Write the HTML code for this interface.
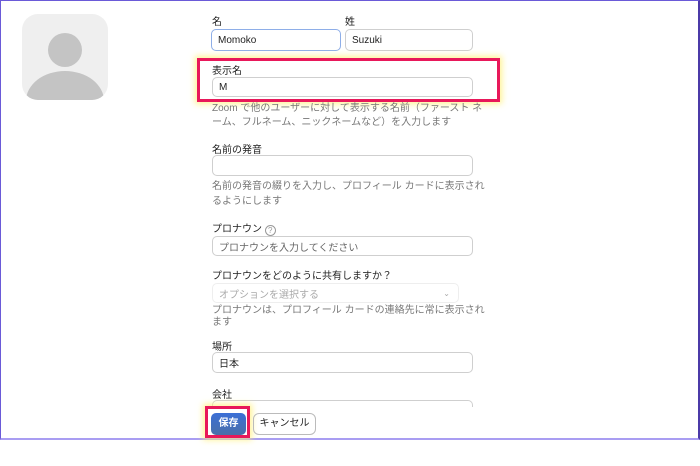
<!DOCTYPE html>
<html><head><meta charset="utf-8"><style>
*{margin:0;padding:0;box-sizing:border-box}
body{width:700px;height:466px;background:#fff;position:relative;overflow:hidden;font-family:"Liberation Sans","Noto Sans CJK JP",sans-serif;color:#222}
.frame{position:absolute;left:0;top:0;width:700px;height:440px;border-top:1px solid #6a5ad8;border-left:1px solid #6a5ad8;border-right:2px solid #4b3aa8;border-bottom:2px solid #a99df2}
.a{position:absolute;white-space:nowrap}
.lbl{font-size:10px;color:#222}
.help{font-size:10px;color:#777;line-height:15px}
.in{position:absolute;border:1px solid #cfcfcf;border-radius:5px;background:#fff;font-size:10px;padding-left:6px;display:flex;align-items:center}
.red{position:absolute;border:3px solid #e8185a;box-shadow:0 0 6px 2px rgba(255,240,120,.8)}
</style></head><body>
<div class="frame"></div>
<div class="a" style="left:22px;top:14px;width:86px;height:86px;background:#efefef;border-radius:16px;overflow:hidden">
<div style="position:absolute;left:26px;top:19px;width:34px;height:34px;border-radius:50%;background:#c4c4c4"></div>
<div style="position:absolute;left:4px;top:57px;width:78px;height:60px;border-radius:50% 50% 0 0;background:#c4c4c4"></div>
</div>
<div class="a lbl" style="left:212px;top:13px">名</div>
<div class="a lbl" style="left:345px;top:13px">姓</div>
<div class="in" style="left:211px;top:29px;width:130px;height:22px;border-color:#8eaee8">Momoko</div>
<div class="in" style="left:345px;top:29px;width:128px;height:22px">Suzuki</div>
<div class="red" style="left:197px;top:58px;width:303px;height:44px"></div>
<div class="a lbl" style="left:212px;top:62px">表示名</div>
<div class="in" style="left:212px;top:77px;width:261px;height:20px">M</div>
<div class="a help" style="left:212px;top:102px;line-height:14px">Zoom で他のユーザーに対して表示する名前（ファースト ネ<br>ーム、フルネーム、ニックネームなど）を入力します</div>
<div class="a lbl" style="left:212px;top:141px">名前の発音</div>
<div class="in" style="left:212px;top:155px;width:261px;height:21px"></div>
<div class="a help" style="left:212px;top:179px">名前の発音の綴りを入力し、プロフィール カードに表示され<br>るようにします</div>
<div class="a lbl" style="left:212px;top:220px">プロナウン <span style="display:inline-block;width:11px;height:11px;border:1px solid #999;border-radius:50%;font-size:8px;color:#999;text-align:center;line-height:9px;vertical-align:-1px">?</span></div>
<div class="in" style="left:212px;top:236px;width:261px;height:20px;color:#666">プロナウンを入力してください</div>
<div class="a lbl" style="left:212px;top:267px">プロナウンをどのように共有しますか？</div>
<div class="in" style="left:212px;top:283px;width:247px;height:20px;color:#aaa;border-color:#eee">オプションを選択する<span style="position:absolute;right:8px;font-size:8px;color:#aaa">⌄</span></div>
<div class="a help" style="left:212px;top:305px;line-height:12px">プロナウンは、プロフィール カードの連絡先に常に表示され<br>ます</div>
<div class="a lbl" style="left:212px;top:338px">場所</div>
<div class="in" style="left:212px;top:352px;width:261px;height:21px">日本</div>
<div class="a lbl" style="left:212px;top:386px">会社</div>
<div class="in" style="left:212px;top:400px;width:261px;height:8px;border-bottom:none;border-radius:5px 5px 0 0"></div>
<div class="a" style="left:200px;top:407px;width:290px;height:31px;background:#fff"></div>
<div class="red" style="left:205px;top:406px;width:45px;height:32px"></div>
<div class="a" style="left:211px;top:413px;width:35px;height:22px;background:linear-gradient(#3b6fd6,#4a6fa8);border-radius:5px;color:#fff;font-size:10px;font-weight:bold;text-align:center;line-height:22px">保存</div>
<div class="a" style="left:253px;top:413px;width:63px;height:22px;border:1px solid #bbb;border-radius:6px;font-size:10px;text-align:center;line-height:20px">キャンセル</div>
</body></html>
